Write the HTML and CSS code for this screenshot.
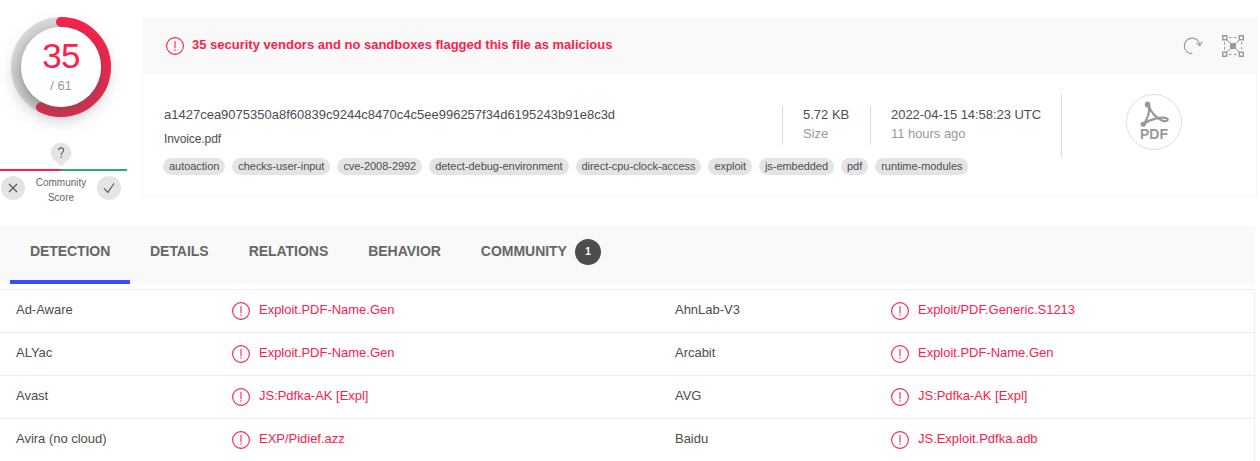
FILE: index.html
```
<!DOCTYPE html>
<html lang="en">
<head>
<meta charset="utf-8">
<title>File report</title>
<link rel="stylesheet" href="styles.css">
</head>
<body>
<svg class="defs" width="0" height="0">
  <symbol id="alert" viewBox="0 0 18 18">
    <circle cx="9" cy="9" r="8.4" fill="none" stroke="currentColor" stroke-width="1.1"/>
    <path d="M9 4v7.2M9 12.3v1.4" fill="none" stroke="currentColor" stroke-width="1.1"/>
  </symbol>
</svg>
<main class="report">
  <section class="summary">
    <aside class="score">
      <div class="gauge">
        <svg class="ring" viewBox="0 0 100 100">
          <circle cx="50" cy="50" r="45" fill="none" stroke="#dedede" stroke-width="10"/>
          <circle cx="50" cy="50" r="45" fill="none" stroke="#fd204b" stroke-width="10" stroke-linecap="round" pathLength="61" stroke-dasharray="35 61" transform="rotate(-90 50 50)"/>
        </svg>
        <div class="dial">
          <span class="hits">35</span>
          <span class="total">/ 61</span>
        </div>
      </div>
      <div class="pin">
        <svg width="22" height="24" viewBox="0 0 22 24"><path d="M11 0.8A10.4 9.9 0 0 1 21.6 10.7C21.6 16 16.5 19 12.2 23.2Q11 24.4 9.8 23.2C5.5 19 .6 16 .6 10.7A10.4 9.9 0 0 1 11 .8Z" fill="#e4e4e4"/><path d="M8.6 8.3C8.8 5 13.6 5.2 13.6 8.2C13.6 10.3 11.2 10.4 11.2 13M11.2 14.2v1.5" fill="none" stroke="#666" stroke-width="1.2"/></svg>
      </div>
      <div class="votes-bar"></div>
      <div class="votes">
        <span class="vote"><svg width="24" height="24" viewBox="0 0 24 24"><path d="M8 8l8 8M16 8l-8 8"/></svg></span>
        <span class="votes-label">Community<br>Score</span>
        <span class="vote"><svg width="24" height="24" viewBox="0 0 24 24"><path d="M7 12.3l3.8 4L17 7.5"/></svg></span>
      </div>
    </aside>
    <article class="card">
      <header class="card-head">
        <svg class="alert"><use href="#alert"/></svg>
        <h1 class="verdict">35 security vendors and no sandboxes flagged this file as malicious</h1>
        <svg class="reload" width="20" height="18" viewBox="0 0 20 18" fill="none" stroke="#999" stroke-width="1.1"><path d="M9.3 16.7A7.8 7.8 0 1 1 16.9 8.5M13.2 5.9l3.7 2.7 2.2-3.9"/></svg>
        <svg class="graph" width="22" height="22" viewBox="0 0 22 22" fill="none" stroke="#999"><path d="M.7.7h4v4h-4zM17.3.7h4v4h-4zM.7 17.3h4v4h-4zM17.3 17.3h4v4h-4z" stroke-width="1.4"/><path d="M5 5l12 12M17 5L5 17M7 2.5h2.5M12 2.5h2.5M7 19.5h2.5M12 19.5h2.5M2.5 7v2.5M2.5 12v2.5M19.5 7v2.5M19.5 12v2.5"/><path d="M8 8h6v6H8z" fill="#999" stroke="none"/></svg>
      </header>
      <div class="card-body">
        <div class="file">
          <div class="facts">
            <div class="names"><div class="hash">a1427cea9075350a8f60839c9244c8470c4c5ee996257f34d6195243b91e8c3d</div><div class="name">Invoice.pdf</div></div>
            <div class="fact size"><div>5.72 KB</div><div class="hint">Size</div></div>
            <div class="fact date"><div>2022-04-15 14:58:23 UTC</div><div class="hint">11 hours ago</div></div>
          </div>
          <div class="tags"><span class="tag">autoaction</span><span class="tag">checks-user-input</span><span class="tag">cve-2008-2992</span><span class="tag">detect-debug-environment</span><span class="tag">direct-cpu-clock-access</span><span class="tag">exploit</span><span class="tag">js-embedded</span><span class="tag">pdf</span><span class="tag">runtime-modules</span></div>
        </div>
        <div class="type">
          <svg width="56" height="56" viewBox="0 0 56 56">
            <circle cx="28" cy="28" r="27.5" fill="none" stroke="#ddd"/>
            <g fill="none" stroke="#999" stroke-width="2.2" stroke-linecap="round">
              <path d="M23 12C24.5 18 30 24 36 26.6C41.5 28.4 43.6 25 40 24C34.5 22.6 24 25 18 30"/>
              <path d="M23.2 13C23.4 18 21.5 25 17.5 30.5"/>
            </g>
            <ellipse cx="21.6" cy="10.6" rx="2.8" ry="3.2" fill="#999"/>
            <ellipse cx="17.2" cy="30.2" rx="2.7" ry="2.5" fill="#999"/>
            <text x="14" y="45" class="pdf-label">PDF</text>
          </svg>
        </div>
      </div>
    </article>
  </section>
  <nav class="tabs">
    <a class="tab active">DETECTION</a><a class="tab">DETAILS</a><a class="tab">RELATIONS</a><a class="tab">BEHAVIOR</a><a class="tab">COMMUNITY</a><span class="badge">1</span>
  </nav>
  <section class="engines">
    <div class="row"><span>Ad-Aware</span><span class="hit"><svg class="alert"><use href="#alert"/></svg>Exploit.PDF-Name.Gen</span><span>AhnLab-V3</span><span class="hit"><svg class="alert"><use href="#alert"/></svg>Exploit/PDF.Generic.S1213</span></div>
    <div class="row"><span>ALYac</span><span class="hit"><svg class="alert"><use href="#alert"/></svg>Exploit.PDF-Name.Gen</span><span>Arcabit</span><span class="hit"><svg class="alert"><use href="#alert"/></svg>Exploit.PDF-Name.Gen</span></div>
    <div class="row"><span>Avast</span><span class="hit"><svg class="alert"><use href="#alert"/></svg>JS:Pdfka-AK [Expl]</span><span>AVG</span><span class="hit"><svg class="alert"><use href="#alert"/></svg>JS:Pdfka-AK [Expl]</span></div>
    <div class="row"><span>Avira (no cloud)</span><span class="hit"><svg class="alert"><use href="#alert"/></svg>EXP/Pidief.azz</span><span>Baidu</span><span class="hit"><svg class="alert"><use href="#alert"/></svg>JS.Exploit.Pdfka.adb</span></div>
  </section>
</main>
</body>
</html>
```
FILE: styles.css
```
* { box-sizing: border-box; }
body { margin: 0; background: #fff; color: #4d4d4d; font: 13px/19px "Liberation Sans", Arial, sans-serif; overflow: hidden; }
svg { display: block; flex: none; }
.defs { position: absolute; }
.report { height: 461px; overflow: hidden; }
.summary { display: flex; gap: 15px; height: 226px; padding-top: 17px; }

.score { width: 127px; flex: none; }
.gauge { display: grid; width: 100px; height: 100px; margin-left: 11px; place-items: center; }
.ring { grid-area: 1 / 1; width: 100px; height: 100px; }
.dial { grid-area: 1 / 1; z-index: 1; width: 80px; height: 80px; border-radius: 50%; background: #fff; box-shadow: 0 6px 20px rgba(90, 90, 90, .75); text-align: center; padding-top: 11px; }
.hits { display: block; font-size: 35px; line-height: 36px; letter-spacing: -.6px; color: #fd204b; }
.total { display: block; margin-top: 2px; line-height: 20px; color: #999; }
.pin { display: flex; padding-left: 50px; margin-top: 25px; }
.votes-bar { height: 2px; margin-top: 3px; background: linear-gradient(90deg, #fd204b 61px, #26b170 61px); }
.votes { display: flex; justify-content: space-between; width: 121px; padding: 4px 0 0 1px; }
.vote { width: 24px; height: 24px; margin-top: 1px; border-radius: 50%; background: #e4e4e4; }
.vote path { fill: none; stroke: #555; stroke-width: 1.1; }
.votes-label { font-size: 10px; line-height: 15px; text-align: center; color: #666; }

.card { width: 1115px; height: 180px; border: 1px solid #f5f5f5; border-top: 0; }
.card-head { display: flex; height: 57px; margin: 0 -1px; padding: 18px 13px 0 24px; background: #f9f9f9; }
.alert { width: 18px; height: 18px; color: #fd204b; }
.card-head .alert { margin-top: 2px; }
.verdict { flex: 1; margin: 0 0 0 8px; font-size: 13px; line-height: 19px; font-weight: 700; color: #fd204b; }
.reload { margin: 2px 19px 0 0; }
.card-body { display: flex; height: 122px; padding: 20px 0 0 20px; }
.file { width: 899px; height: 64px; padding-top: 12px; border-right: 1px solid #ddd; }
.facts { display: flex; height: 39px; }
.names { width: 619px; padding-left: 1px; }
.hash { line-height: 17px; }
.name { font-size: 12px; line-height: 16px; margin-top: 8px; letter-spacing: -.1px; }
.fact { border-left: 1px solid #ddd; padding-left: 20px; line-height: 17px; }
.fact .hint { margin-top: 2px; color: #999; }
.size { width: 88px; }
.date { letter-spacing: -.04px; }
.tags { display: flex; gap: 7px; margin-top: 13px; white-space: nowrap; }
.tag { height: 17px; padding: 0 6px; border-radius: 9px; background: #e4e4e4; font-size: 11px; line-height: 17px; letter-spacing: -.045px; }
.type { padding-left: 64px; }
.pdf-label { font: bold 14px "Liberation Sans", Arial, sans-serif; fill: #999; }

.tabs { display: flex; width: 1255px; height: 58px; padding-left: 10px; background: #f9f9f9; font-size: 14px; font-weight: 700; color: #666; }
.tab { height: 58px; padding: 16px 20px 0; line-height: 18px; letter-spacing: -.03px; }
.tab.active { width: 120px; letter-spacing: -.08px; border-bottom: 4px solid #394eff; }
.badge { width: 26px; height: 26px; margin: 13px 0 0 -12px; border-radius: 50%; background: #4d4d4d; color: #fff; font-size: 10px; line-height: 25px; text-align: center; }

.engines { width: 1255px; margin-top: 5px; border-right: 1px solid #eee; }
.row { display: grid; grid-template-columns: 216px 443px 216px 1fr; height: 43px; padding: 10px 0 0 16px; border-top: 1px solid #eee; letter-spacing: -.02px; }
.hit { display: flex; gap: 9px; color: #fd204b; }
.hit .alert { margin-top: 2px; }
```
